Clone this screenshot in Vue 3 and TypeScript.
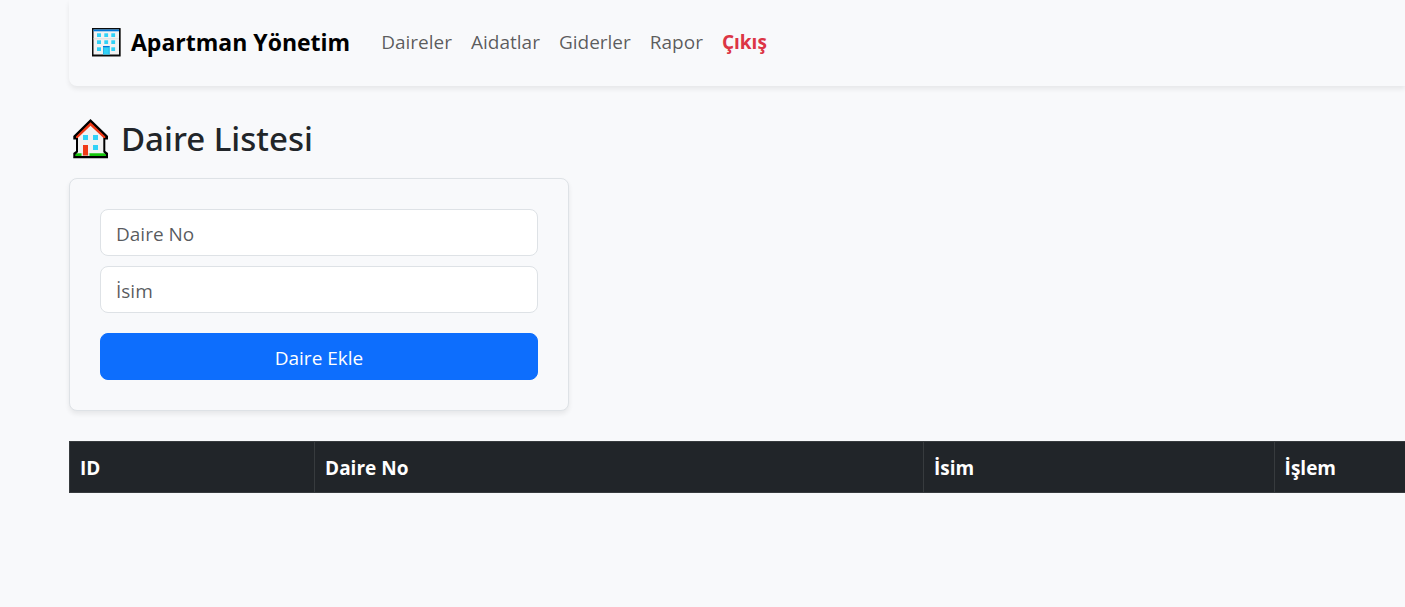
<script setup lang="ts">
import { ref } from 'vue'

interface NavItem {
  label: string
  href: string
  danger?: boolean
}

const navItems: NavItem[] = [
  { label: 'Daireler', href: '#daireler' },
  { label: 'Aidatlar', href: '#aidatlar' },
  { label: 'Giderler', href: '#giderler' },
  { label: 'Rapor', href: '#rapor' },
  { label: 'Çıkış', href: '#cikis', danger: true },
]

interface Flat {
  id: number
  no: string
  name: string
}

const flats = ref<Flat[]>([])
const flatNo = ref('')
const flatName = ref('')

function addFlat(): void {
  if (!flatNo.value || !flatName.value) return
  flats.value.push({ id: flats.value.length + 1, no: flatNo.value, name: flatName.value })
  flatNo.value = ''
  flatName.value = ''
}

function removeFlat(id: number): void {
  flats.value = flats.value.filter((flat) => flat.id !== id)
}
</script>

<template>
  <div class="page">
    <nav class="navbar">
      <a class="brand" href="#">
        <svg class="brand-icon" viewBox="0 0 30 30" aria-hidden="true">
          <rect x="1" y="2" width="28.600" height="28" fill="#000" opacity="0.25" />
          <rect x="1" y="1" width="28.600" height="28.300" fill="#0b0b0b" />
          <rect x="2.500" y="2.500" width="25.500" height="25" fill="#f2f2f2" />
          <rect x="2.500" y="2.500" width="25.500" height="1.800" fill="#0078d7" />
          <rect x="2.500" y="11.300" width="25.500" height="1" fill="#dedede" />
          <g fill="#31d2f7">
            <rect x="6" y="6.300" width="4" height="3.700" />
            <rect x="13.300" y="6.300" width="3.800" height="3.700" />
            <rect x="20.300" y="6.300" width="3.800" height="3.700" />
            <rect x="6" y="13.300" width="4" height="3.700" />
            <rect x="13.300" y="13.300" width="3.800" height="3.700" />
            <rect x="20.300" y="13.300" width="3.800" height="3.700" />
            <rect x="6" y="20.300" width="4" height="3.700" />
            <rect x="20.300" y="20.300" width="3.800" height="3.700" />
            <rect x="12" y="19" width="6.600" height="8.500" />
          </g>
          <rect x="12" y="19" width="6.600" height="1.300" fill="#0078d7" />
          <rect x="12" y="20.300" width="1" height="7.200" fill="#28b4e6" />
          <rect x="17.600" y="20.300" width="1" height="7.200" fill="#28b4e6" />
        </svg>
        <span>Apartman Yönetim</span>
      </a>
      <ul class="nav-list">
        <li v-for="item in navItems" :key="item.label">
          <a class="nav-link" :class="{ danger: item.danger }" :href="item.href">{{ item.label }}</a>
        </li>
      </ul>
    </nav>

    <main>
      <h2 class="title">
        <svg class="title-icon" viewBox="0 0 36 40" aria-hidden="true">
          <rect x="0.300" y="38" width="34.700" height="2" fill="#000" opacity="0.25" />
          <path
            d="M17.500 0 0.300 17V20.500H3V32L0.300 34V39H35V34L32.300 32V20.500H35V17Z"
            fill="#000"
          />
          <path d="M17.500 5 5 17.500V33L3 35.500H32.300L30.300 33V17.500Z" fill="#f2f2f2" />
          <path d="M17.500 3.300 3 17.600V19H4.700L17.500 6.700 30.600 19H32.300V17.600Z" fill="#f03a17" />
          <rect x="10" y="16" width="5" height="5" fill="#31d2f7" />
          <rect x="20" y="16" width="5" height="5" fill="#31d2f7" />
          <rect x="20" y="26" width="5" height="5" fill="#31d2f7" />
          <path d="M2.300 37V35.500L4.500 34.300H30.800L33 35.500V37Z" fill="#16c60c" />
          <rect x="8.500" y="34" width="8" height="3" fill="#e0e0e0" />
          <rect x="10" y="26" width="5" height="10.500" fill="#f03a17" />
        </svg>
        <span>Daire Listesi</span>
      </h2>

      <form class="card" @submit.prevent="addFlat">
        <input v-model="flatNo" class="field" type="text" placeholder="Daire No" aria-label="Daire No" />
        <input v-model="flatName" class="field" type="text" placeholder="İsim" aria-label="İsim" />
        <button class="submit" type="submit">Daire Ekle</button>
      </form>

      <table class="table">
        <colgroup>
          <col class="col-id" />
          <col class="col-no" />
          <col class="col-name" />
          <col />
        </colgroup>
        <thead>
          <tr>
            <th scope="col">ID</th>
            <th scope="col">Daire No</th>
            <th scope="col">İsim</th>
            <th scope="col">İşlem</th>
          </tr>
        </thead>
        <tbody>
          <tr v-for="flat in flats" :key="flat.id">
            <td>{{ flat.id }}</td>
            <td>{{ flat.no }}</td>
            <td>{{ flat.name }}</td>
            <td><button type="button" @click="removeFlat(flat.id)">Sil</button></td>
          </tr>
        </tbody>
      </table>
    </main>
  </div>
</template>

<style>
body {
  margin: 0;
  background: #f8f9fb;
  overflow-x: hidden;
}
</style>

<style scoped>
.page {
  padding-left: 69px;
  color: #212529;
  font-family: 'Segoe UI', 'Open Sans', 'Noto Sans', sans-serif;
  font-size: 19px;
  line-height: 30px;
}

.page *,
.page {
  box-sizing: border-box;
}

.navbar {
  display: flex;
  align-items: center;
  gap: 31px;
  padding: 20px 22px 22px;
  border-radius: 0 0 0 8px;
  background: #f8f9fb;
  box-shadow: 0 3px 5px rgba(0, 0, 0, 0.075);
}

.brand {
  display: flex;
  align-items: center;
  gap: 10px;
  color: #000;
  font-size: 23px;
  font-weight: 700;
  line-height: 44px;
  text-decoration: none;
}

.brand-icon {
  width: 30px;
  height: 30px;
}

.nav-list {
  display: flex;
  gap: 19px;
  margin: 0;
  padding: 0;
  list-style: none;
}

.nav-link {
  color: rgba(0, 0, 0, 0.65);
  text-decoration: none;
}

.nav-link.danger {
  color: #dc3545;
  font-weight: 700;
}

.title {
  display: flex;
  align-items: center;
  gap: 12px;
  margin: 30px 0 16px;
  padding-left: 4px;
  font-family: 'Segoe UI', 'Noto Sans', 'Open Sans', sans-serif;
  font-size: 33px;
  font-weight: 500;
  line-height: 46px;
}

.title-icon {
  width: 36px;
  height: 40px;
}

.card {
  display: flex;
  flex-direction: column;
  gap: 10px;
  max-width: 500px;
  padding: 30px;
  border: 1px solid #dee2e6;
  border-radius: 8px;
  background: #f8f9fb;
  box-shadow: 0 3px 5px rgba(0, 0, 0, 0.075);
}

.field,
.submit {
  width: 100%;
  padding: 9px 15px 6px;
  border: 1px solid #dee2e6;
  border-radius: 8px;
  font: inherit;
  line-height: 30px;
}

.field {
  background: #fff;
  color: #212529;
}

.field::placeholder {
  color: rgba(33, 37, 41, 0.75);
  opacity: 1;
}

.submit {
  margin-top: 10px;
  border-color: #0d6efd;
  background: #0d6efd;
  color: #fff;
}

.table {
  width: 100%;
  margin-top: 30px;
  border-collapse: collapse;
  table-layout: fixed;
}

.col-id {
  width: 18.35%;
}

.col-no {
  width: 45.6%;
}

.col-name {
  width: 26.25%;
}

.table th,
.table td {
  padding: 11px 10px 9px;
  border: 1px solid #dee2e6;
  text-align: left;
}

.table th {
  border-color: #373b3e;
  border-right-width: 0;
  background: #212529;
  color: #fff;
  font-weight: 700;
}
</style>
